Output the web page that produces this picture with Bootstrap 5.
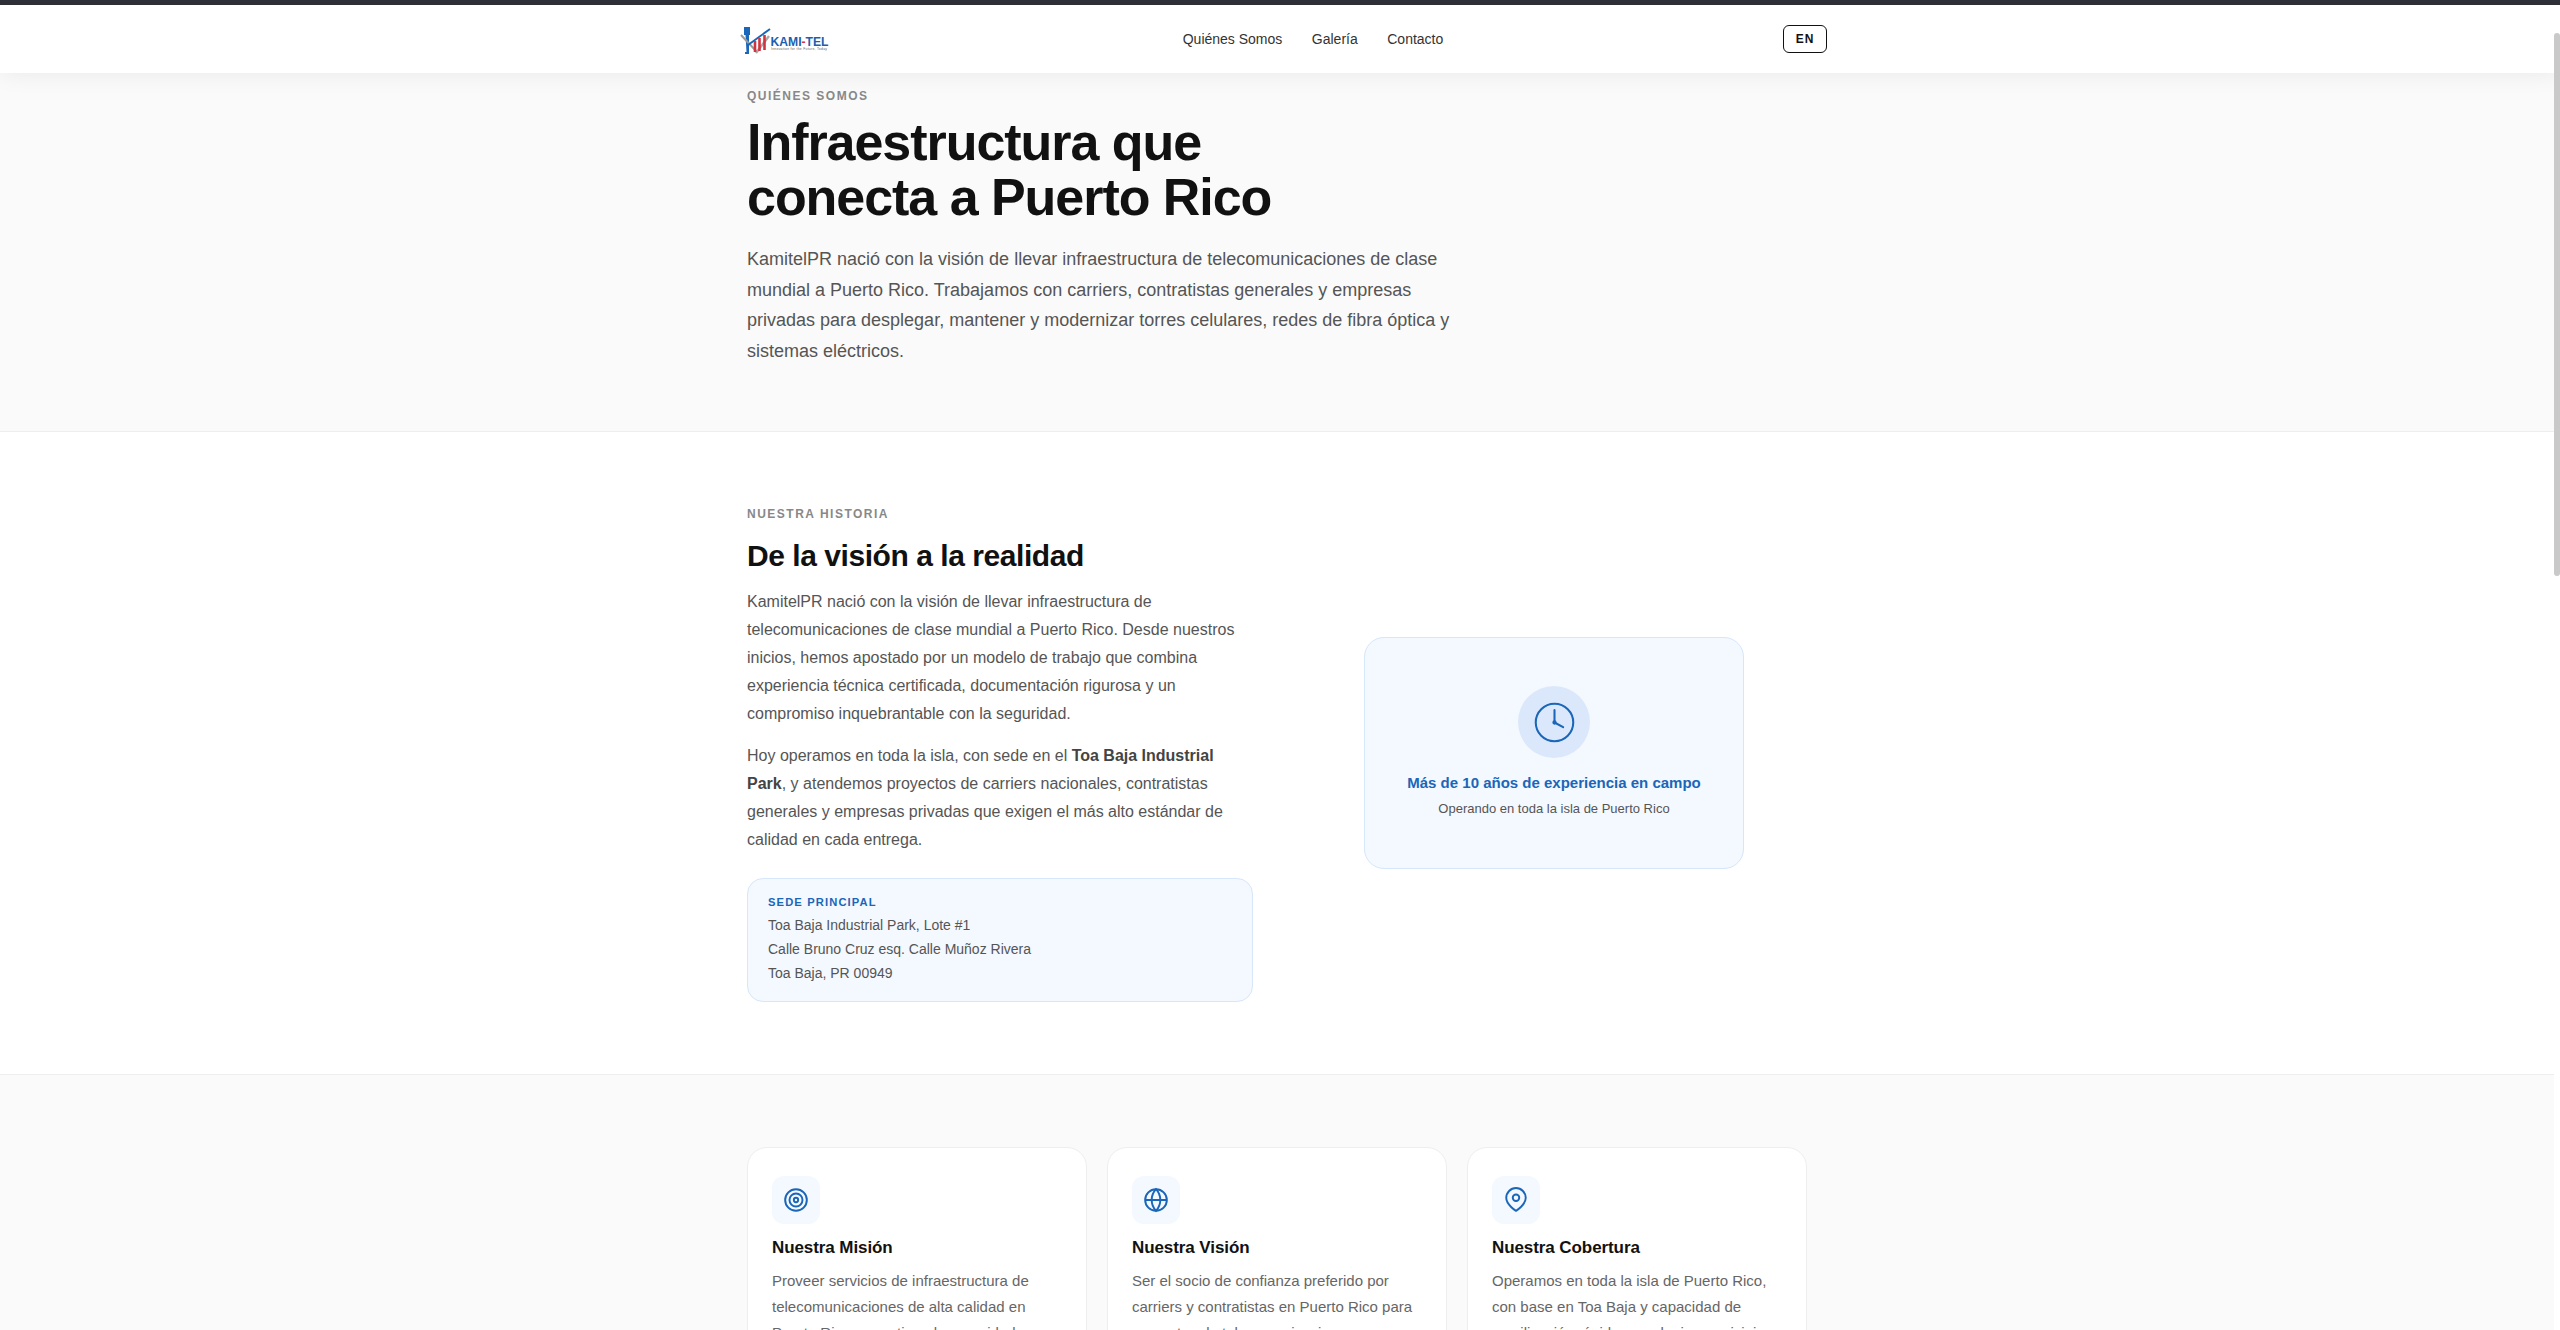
<!DOCTYPE html>
<html lang="es">
<head>
  <meta charset="UTF-8" />
  <meta name="viewport" content="width=device-width, initial-scale=1.0"/>
  <title>Quiénes Somos - KamitelPR</title>
  <link href="https://cdn.jsdelivr.net/npm/bootstrap@5.3.0/dist/css/bootstrap.min.css" rel="stylesheet">
  <style>
    html, body { height: 1330px; overflow: hidden; }
    body { font-family: "Liberation Sans", Arial, sans-serif; color: #111; background: #fff; padding-right: 6px; }

    .site-nav { border-top: 5px solid #2f2f37; height: 73px; padding: 0; margin-right: -6px; background: #fff; box-shadow: 0 1px 24px rgba(0,0,0,.07); position: relative; z-index: 5; }
    .nav-inner { width: 1100px; margin-left: 727px; }
    .site-nav .nav-link { font-size: 14px; color: #333; padding: 1px 0 0; }
    .nav-links { gap: 29.5px; }
    .logo-svg { display: block; }
    .btn-lang { width: 44px; height: 28px; padding: 0; border: 1.5px solid #111; border-radius: 6px; font-size: 12px; font-weight: 700; letter-spacing: .08em; color: #111; background: #fff; }

    .wrap { max-width: 1060px; margin: 0 auto; }
    .eyebrow { font-size: 12px; font-weight: 700; letter-spacing: .125em; color: #888; text-transform: uppercase; }

    .hero { background: #fafafa; border-bottom: 1px solid #eee; height: 359px; padding-top: 14px; }
    .hero h1 { font-size: 52px; font-weight: 700; line-height: 55px; letter-spacing: -.02em; color: #111; margin: 10px 0 19px; }
    .hero p { font-size: 18px; line-height: 30.6px; color: #555; max-width: 720px; margin: 0; }

    .story { height: 642px; padding-top: 73px; }
    .story h2 { font-size: 30px; font-weight: 700; letter-spacing: -.015em; color: #111; margin: 13px 0 12px; line-height: 40px; }
    .story-text { width: 506px; }
    .story-text p { font-size: 16px; line-height: 28px; color: #555; margin-bottom: 14px; }
    .story-text strong { color: #444; }
    .sede { background: #f4f8ff; border: 1px solid #d6e6fb; border-radius: 16px; padding: 12px 20px 16px; margin-top: 24px; }
    .sede-title { font-size: 11.2px; font-weight: 700; letter-spacing: .1em; color: #1a66b8; line-height: 22px; }
    .sede-line { font-size: 14px; line-height: 24px; color: #555; }

    .exp-card { width: 380px; height: 232px; margin-left: 111px; margin-top: 132px; padding-top: 48px; background: #f4f8ff; border: 1px solid #d6e6fb; border-radius: 20px; }
    .exp-circle { width: 72px; height: 72px; background: #dbe8fb; }
    .exp-title { font-size: 15px; font-weight: 700; color: #1a66b8; margin-top: 14px; line-height: 22.5px; }
    .exp-sub { font-size: 13px; color: #555; margin-top: 4.5px; line-height: 19.5px; }

    .values { background: #fafafa; border-top: 1px solid #eee; padding-top: 72px; height: 400px; }
    .value-card { background: #fff; border: 1px solid #eee; border-radius: 20px; padding: 28px 24px; height: 300px; }
    .value-icon { width: 48px; height: 48px; background: #f4f8ff; border-radius: 12px; margin-bottom: 12px; }
    .value-card h3 { font-size: 17px; font-weight: 700; letter-spacing: -.005em; color: #111; margin: 0 0 8px; line-height: 24px; }
    .value-card p { font-size: 15px; line-height: 26px; color: #666; margin: 0; }
    .value-row { --bs-gutter-x: 20px; }

    .thumb { position: fixed; top: 33px; right: 0; width: 6px; height: 543px; background: #c9c9c9; border-radius: 3px; z-index: 10; }
  </style>
</head>
<body>

  <nav class="navbar site-nav">
    <div class="nav-inner d-flex align-items-center justify-content-between">
      <a class="d-block" href="#">
        <!-- coordenadas del viewBox = pixeles de la pagina -->
        <svg class="logo-svg" width="116" height="44" viewBox="727 17 116 44">
          <path d="M744 27h6v8h-6zM747 25v2M745.5 35h3.5v19h-4v-2h1.5z" fill="#1a66b8"/>
          <path d="M741 35l16 17" stroke="#9a9a9a" stroke-width="2" fill="none"/>
          <path d="M748 45l22-16" stroke="#1a66b8" stroke-width="2" fill="none"/>
          <path d="M756 53l13-17" stroke="#aaa" stroke-width="2.4" fill="none"/>
          <path d="M755 52V41M759.5 51V38M764.5 50V35" stroke="#d2343e" stroke-width="2.6"/>
          <text x="770.5" y="45.5" font-family="Liberation Sans, Arial, sans-serif" font-size="13" font-weight="700" textLength="58" lengthAdjust="spacingAndGlyphs" fill="#1a5fb0">KAMI<tspan fill="#d2343e">-</tspan>TEL</text>
          <text x="771" y="49.5" font-family="Liberation Sans, Arial, sans-serif" font-size="3.4" textLength="56" fill="#666">Innovation for the Future, Today</text>
        </svg>
      </a>
      <ul class="navbar-nav flex-row nav-links">
        <li class="nav-item"><a class="nav-link" href="#">Quiénes Somos</a></li>
        <li class="nav-item"><a class="nav-link" href="#">Galería</a></li>
        <li class="nav-item"><a class="nav-link" href="#">Contacto</a></li>
      </ul>
      <button class="btn btn-lang" type="button">EN</button>
    </div>
  </nav>

  <section class="hero">
    <div class="wrap">
      <div class="eyebrow">Quiénes Somos</div>
      <h1>Infraestructura que<br>conecta a Puerto Rico</h1>
      <p>KamitelPR nació con la visión de llevar infraestructura de telecomunicaciones de clase mundial a Puerto Rico. Trabajamos con carriers, contratistas generales y empresas privadas para desplegar, mantener y modernizar torres celulares, redes de fibra óptica y sistemas eléctricos.</p>
    </div>
  </section>

  <section class="story">
    <div class="wrap d-flex">
      <div class="story-text">
        <div class="eyebrow">Nuestra Historia</div>
        <h2>De la visión a la realidad</h2>
        <p>KamitelPR nació con la visión de llevar infraestructura de telecomunicaciones de clase mundial a Puerto Rico. Desde nuestros inicios, hemos apostado por un modelo de trabajo que combina experiencia técnica certificada, documentación rigurosa y un compromiso inquebrantable con la seguridad.</p>
        <p>Hoy operamos en toda la isla, con sede en el <strong>Toa Baja Industrial Park</strong>, y atendemos proyectos de carriers nacionales, contratistas generales y empresas privadas que exigen el más alto estándar de calidad en cada entrega.</p>
        <div class="sede">
          <div class="sede-title">SEDE PRINCIPAL</div>
          <div class="sede-line">Toa Baja Industrial Park, Lote #1</div>
          <div class="sede-line">Calle Bruno Cruz esq. Calle Muñoz Rivera</div>
          <div class="sede-line">Toa Baja, PR 00949</div>
        </div>
      </div>
      <div class="exp-card d-flex flex-column align-items-center text-center">
        <div class="exp-circle rounded-circle d-flex align-items-center justify-content-center">
          <svg width="45" height="45" viewBox="0 0 24 24" fill="none" stroke="#1a66b8" stroke-width="1.1" stroke-linecap="round" stroke-linejoin="round">
            <circle cx="12" cy="12" r="10"/>
            <path d="M12 5.4V12l4.6 2.5"/>
            <circle cx="12" cy="12" r=".6" fill="#1a66b8"/>
          </svg>
        </div>
        <div class="exp-title">Más de 10 años de experiencia en campo</div>
        <div class="exp-sub">Operando en toda la isla de Puerto Rico</div>
      </div>
    </div>
  </section>

  <section class="values">
    <div class="wrap">
      <div class="row value-row">
        <div class="col-4">
          <div class="value-card">
            <div class="value-icon d-flex align-items-center justify-content-center">
              <svg width="26" height="26" viewBox="0 0 24 24" fill="none" stroke="#1a66b8" stroke-width="1.8">
                <circle cx="12" cy="12" r="10"/><circle cx="12" cy="12" r="6"/><circle cx="12" cy="12" r="2"/>
              </svg>
            </div>
            <h3>Nuestra Misión</h3>
            <p>Proveer servicios de infraestructura de telecomunicaciones de alta calidad en Puerto Rico, garantizando seguridad</p>
          </div>
        </div>
        <div class="col-4">
          <div class="value-card">
            <div class="value-icon d-flex align-items-center justify-content-center">
              <svg width="26" height="26" viewBox="0 0 24 24" fill="none" stroke="#1a66b8" stroke-width="1.8">
                <circle cx="12" cy="12" r="10"/><path d="M2 12h20"/><path d="M12 2a15 15 0 0 1 4 10 15 15 0 0 1-4 10 15 15 0 0 1-4-10 15 15 0 0 1 4-10z"/>
              </svg>
            </div>
            <h3>Nuestra Visión</h3>
            <p>Ser el socio de confianza preferido por carriers y contratistas en Puerto Rico para proyectos de telecomunicaciones</p>
          </div>
        </div>
        <div class="col-4">
          <div class="value-card">
            <div class="value-icon d-flex align-items-center justify-content-center">
              <svg width="26" height="26" viewBox="0 0 24 24" fill="none" stroke="#1a66b8" stroke-width="1.8" stroke-linejoin="round">
                <path d="M21 10c0 6.5-9 12-9 12S3 16.5 3 10a9 9 0 0 1 18 0z"/><circle cx="12" cy="10" r="3"/>
              </svg>
            </div>
            <h3>Nuestra Cobertura</h3>
            <p>Operamos en toda la isla de Puerto Rico, con base en Toa Baja y capacidad de movilización rápida a cualquier municipio</p>
          </div>
        </div>
      </div>
    </div>
  </section>

  <div class="thumb"></div>

  <script src="https://cdn.jsdelivr.net/npm/bootstrap@5.3.0/dist/js/bootstrap.bundle.min.js"></script>
</body>
</html>
